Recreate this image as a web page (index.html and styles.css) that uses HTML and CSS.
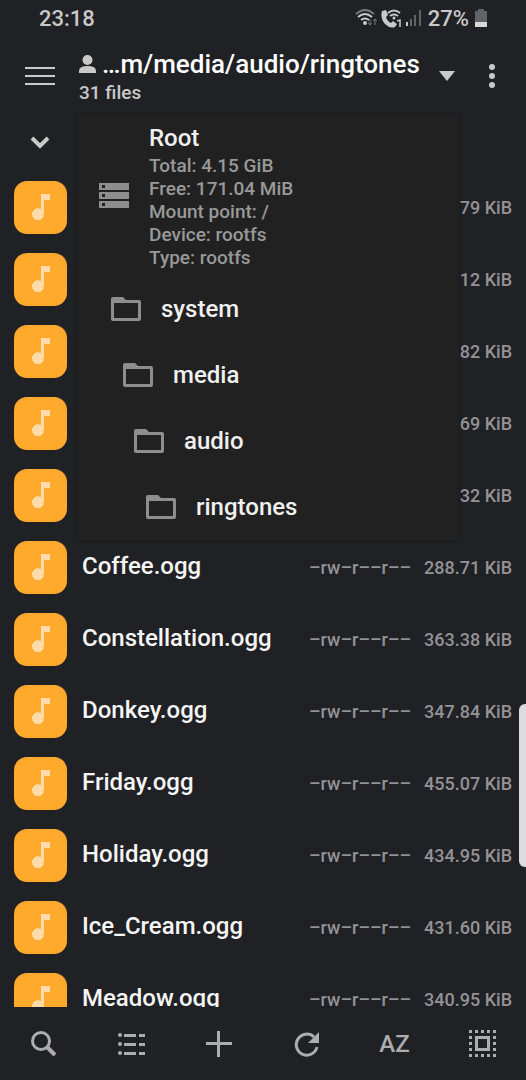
FILE: index.html
```html
<!DOCTYPE html>
<html lang="en">
<head>
  <meta charset="UTF-8" />
  <meta name="viewport" content="width=device-width, initial-scale=1" />
  <title>Ringtones</title>
  <link rel="stylesheet" href="styles.css">
</head>
<body>

  <svg class="sprite" aria-hidden="true">
    <symbol id="folder" viewBox="0 0 30 24">
      <path fill="currentColor" fill-rule="evenodd" d="M2 0h10l3 3h13a2 2 0 0 1 2 2v17a2 2 0 0 1-2 2H2a2 2 0 0 1-2-2V2a2 2 0 0 1 2-2zm1 6v15h24V6z" />
    </symbol>
    <symbol id="note" viewBox="0 0 18 26">
      <path fill="currentColor" d="M9 0h9v6h-6v14a6 6 0 1 1-3-5z" />
    </symbol>
  </svg>

  <div class="status">
    <span>23:18</span>
    <div class="status-right">
      <svg width="67" height="20" viewBox="0 0 67 20">
        <g fill="none" stroke-width="2">
          <path stroke="#77787a" d="M1 6Q10-2 19 6" />
          <path stroke="#c9c9ca" d="M3 9Q10 3 17 9M6 12Q10 9 14 12" />
          <path stroke="#77787a" stroke-width="1" d="M15 11v6M13 15l2 2 2-2M20 17v-6M18 13l2-2 2 2" />
        </g>
        <circle cx="10" cy="15" r="2" fill="#c9c9ca" />
        <path fill="#c9c9ca" d="M27 3l4-1 2 5-2 2q1 4 5 6l2-2 4 3-2 3q-5 2-10-3-5-6-3-13z" />
        <g fill="none" stroke="#c9c9ca" stroke-width="2">
          <path d="M33 5q6-5 12 0M35 8q4-3 8 0" />
          <path stroke-width="1.500" d="M42 13l3-1v7" />
        </g>
        <circle cx="39" cy="10" r="1.500" fill="#c9c9ca" />
        <path fill="#c9c9ca" d="M51 14h2v4h-2z" />
        <path fill="#626365" d="M55 11h2v7h-2zM59 7h2v11h-2zM64 2h2v16h-2z" />
      </svg>
      <span>27%</span>
      <svg width="12" height="18" viewBox="0 0 12 18">
        <path fill="#626365" d="M3 0h6v2h3v11H0V2h3z" />
        <path fill="#d8d8d8" d="M0 13h12v5H0z" />
      </svg>
    </div>
  </div>

  <header class="header">
    <button class="icon-btn" aria-label="Menu">
      <svg width="30" height="20" viewBox="0 0 30 20"><path fill="currentColor" d="M0 1h30v2H0zM0 9h30v2H0zM0 17h30v2H0z" /></svg>
    </button>
    <button class="path">
      <span class="path-text">
        <span class="path-title">
          <svg width="17" height="18" viewBox="0 0 17 18"><circle cx="8.500" cy="5" r="5" fill="currentColor" /><path fill="currentColor" d="M0 18v-2q0-5 8.500-5t8.500 5v2z" /></svg>
          <span>…m/media/audio/ringtones</span>
        </span>
        <span class="path-info">31 files</span>
      </span>
      <svg class="caret" width="16" height="10" viewBox="0 0 16 10"><path fill="currentColor" d="M0 0h16L8 10z" /></svg>
    </button>
    <button class="icon-btn more" aria-label="More options">
      <svg width="8" height="26" viewBox="0 0 8 26"><g fill="currentColor"><circle cx="4" cy="4" r="3" /><circle cx="4" cy="13" r="3" /><circle cx="4" cy="22" r="3" /></g></svg>
    </button>

    <nav class="popup">
      <a class="node root" href="#">
        <svg width="30" height="25" viewBox="0 0 30 25"><path fill="currentColor" fill-rule="evenodd" d="M0 0h30v7H0zm3 2v3h3V2zM0 9h30v7H0zm3 2v3h3v-3zM0 18h30v7H0zm3 2v3h3v-3z" /></svg>
        <span class="root-text">
          <span class="node-name">Root</span>
          <span class="root-info">Total: 4.15 GiB<br>Free: 171.04 MiB<br>Mount point: /<br>Device: rootfs<br>Type: rootfs</span>
        </span>
      </a>
      <a class="node level-1" href="#"><svg width="30" height="24"><use href="#folder" /></svg><span class="node-name">system</span></a>
      <a class="node level-2" href="#"><svg width="30" height="24"><use href="#folder" /></svg><span class="node-name">media</span></a>
      <a class="node level-3" href="#"><svg width="30" height="24"><use href="#folder" /></svg><span class="node-name">audio</span></a>
      <a class="node level-4" href="#"><svg width="30" height="24"><use href="#folder" /></svg><span class="node-name">ringtones</span></a>
    </nav>
  </header>

  <main class="files">
    <button class="expand" aria-label="Expand">
      <svg width="20" height="14" viewBox="0 0 20 14"><path fill="none" stroke="currentColor" stroke-width="4" d="M2 2l8 8 8-8" /></svg>
    </button>
    <ul class="list">
      <li class="row"><span class="thumb"><svg width="18" height="26"><use href="#note" /></svg></span><span class="size">.79 KiB</span></li>
      <li class="row"><span class="thumb"><svg width="18" height="26"><use href="#note" /></svg></span><span class="size">.12 KiB</span></li>
      <li class="row"><span class="thumb"><svg width="18" height="26"><use href="#note" /></svg></span><span class="size">82 KiB</span></li>
      <li class="row"><span class="thumb"><svg width="18" height="26"><use href="#note" /></svg></span><span class="size">69 KiB</span></li>
      <li class="row"><span class="thumb"><svg width="18" height="26"><use href="#note" /></svg></span><span class="size">32 KiB</span></li>
      <li class="row"><span class="thumb"><svg width="18" height="26"><use href="#note" /></svg></span><span class="name">Coffee.ogg</span><span class="perms">–rw–r––r––</span><span class="size">288.71 KiB</span></li>
      <li class="row"><span class="thumb"><svg width="18" height="26"><use href="#note" /></svg></span><span class="name">Constellation.ogg</span><span class="perms">–rw–r––r––</span><span class="size">363.38 KiB</span></li>
      <li class="row"><span class="thumb"><svg width="18" height="26"><use href="#note" /></svg></span><span class="name">Donkey.ogg</span><span class="perms">–rw–r––r––</span><span class="size">347.84 KiB</span></li>
      <li class="row"><span class="thumb"><svg width="18" height="26"><use href="#note" /></svg></span><span class="name">Friday.ogg</span><span class="perms">–rw–r––r––</span><span class="size">455.07 KiB</span></li>
      <li class="row"><span class="thumb"><svg width="18" height="26"><use href="#note" /></svg></span><span class="name">Holiday.ogg</span><span class="perms">–rw–r––r––</span><span class="size">434.95 KiB</span></li>
      <li class="row"><span class="thumb"><svg width="18" height="26"><use href="#note" /></svg></span><span class="name">Ice_Cream.ogg</span><span class="perms">–rw–r––r––</span><span class="size">431.60 KiB</span></li>
      <li class="row"><span class="thumb"><svg width="18" height="26"><use href="#note" /></svg></span><span class="name">Meadow.ogg</span><span class="perms">–rw–r––r––</span><span class="size">340.95 KiB</span></li>
    </ul>
    <div class="scroll-thumb"></div>
  </main>

  <footer class="toolbar">
    <button aria-label="Search">
      <svg width="26" height="26" viewBox="0 0 26 26"><g fill="none" stroke="currentColor"><circle cx="10" cy="10" r="8.500" stroke-width="3" /><path stroke-width="4" d="M16 16l8 8" /></g></svg>
    </button>
    <button aria-label="View">
      <svg width="28" height="24" viewBox="0 0 28 24"><g fill="currentColor"><circle cx="3" cy="3" r="2" /><circle cx="3" cy="12" r="2" /><circle cx="3" cy="21" r="2" /><path d="M7 2h12v3H7zM22 2h6v3h-6zM7 11h12v3H7zM22 11h6v3h-6zM7 20h12v3H7zM22 20h6v3h-6z" /></g></svg>
    </button>
    <button aria-label="Add">
      <svg width="26" height="26" viewBox="0 0 26 26"><path fill="currentColor" d="M11 0h3v11h12v3H14v12h-3V14H0v-3h11z" /></svg>
    </button>
    <button aria-label="Refresh">
      <svg width="26" height="26" viewBox="0 0 26 26"><path fill="none" stroke="currentColor" stroke-width="3" d="M20 6a10.500 10.500 0 1 0 3 10" /><path fill="currentColor" d="M25 1v11H14z" /></svg>
    </button>
    <button>AZ</button>
    <button aria-label="Select all">
      <svg width="27" height="27" viewBox="0 0 27 27"><g fill="none" stroke="currentColor" stroke-width="3"><path stroke-dasharray="3 3" d="M0 1.500h27M0 25.500h27M1.500 0v27M25.500 0v27" /><path d="M7.500 7.500h12v12h-12z" /></g></svg>
    </button>
  </footer>

</body>
</html>
```
FILE: styles.css
```css
* {
  box-sizing: border-box;
}

body {
  display: flex;
  flex-direction: column;
  height: 100vh;
  margin: 0;
  overflow: hidden;
  background: #202125;
  color: #f5f5f5;
  font-family: Roboto, sans-serif;
  font-weight: 500;
}

button {
  padding: 0;
  border: none;
  background: none;
  color: inherit;
  font: inherit;
  text-align: left;
}

svg {
  display: block;
  flex: none;
}

.sprite {
  position: absolute;
  width: 0;
  height: 0;
}

.status {
  display: flex;
  justify-content: space-between;
  align-items: center;
  flex: none;
  height: 36px;
  padding: 0 39px;
  color: #c9c9ca;
  font-size: 22px;
}

.status-right {
  display: flex;
  align-items: center;
  gap: 6px;
}

/* header */
.header {
  position: relative;
  display: flex;
  align-items: center;
  flex: none;
  height: 79px;
}

.icon-btn {
  display: flex;
  justify-content: center;
  align-items: center;
  flex: none;
  width: 79px;
  height: 79px;
  color: #c9c9ca;
}

.icon-btn.more {
  width: 69px;
}

.path {
  display: flex;
  align-items: center;
  justify-content: space-between;
  flex: 1;
  min-width: 0;
}

.path-text {
  display: flex;
  flex-direction: column;
  padding-top: 3px;
}

.path-title {
  display: flex;
  align-items: center;
  gap: 6px;
  color: #fff;
  font-size: 26px;
  line-height: 32px;
  white-space: nowrap;
}

.path-title svg {
  color: #c9c9ca;
}

.path-info {
  color: #c9c9ca;
  font-size: 19px;
  line-height: 26px;
}

.caret {
  margin-right: 2px;
  color: #c9c9ca;
}

/* path popup */
.popup {
  position: absolute;
  z-index: 1;
  top: 79px;
  left: 78px;
  right: 67px;
  background: #212121;
  box-shadow: 0 1px 4px rgba(0, 0, 0, 0.3);
}

.node {
  display: flex;
  align-items: center;
  gap: 20px;
  height: 66px;
  padding-left: 21px;
  color: #8e8e8e;
  text-decoration: none;
}

.root {
  height: 161px;
}

.level-1 { padding-left: 33px; }
.level-2 { padding-left: 45px; }
.level-3 { padding-left: 56px; }
.level-4 { padding-left: 68px; }

.root-text {
  display: flex;
  flex-direction: column;
}

.node-name {
  color: #f0f0f0;
  font-size: 24px;
  line-height: 32px;
}

.root-info {
  color: #999;
  font-size: 19px;
  line-height: 23px;
}

/* file list */
.files {
  position: relative;
  flex: 1;
  min-height: 0;
  overflow: hidden;
}

.expand {
  display: flex;
  justify-content: center;
  align-items: center;
  width: 79px;
  height: 56px;
  color: #c9c9ca;
}

.list {
  margin: 0;
  padding: 0;
  list-style: none;
}

.row {
  display: flex;
  align-items: center;
  height: 72px;
  padding: 0 14px;
}

.thumb {
  display: flex;
  justify-content: center;
  align-items: center;
  width: 53px;
  height: 53px;
  margin-right: 15px;
  border-radius: 13px;
  background: #ffa92d;
  color: #ffdba8;
}

.name {
  padding-bottom: 2px;
  font-size: 24px;
}

.perms,
.size {
  color: #929395;
  font-size: 18px;
}

.perms {
  margin-left: auto;
}

.size {
  width: 89px;
  margin-left: 12px;
  text-align: right;
  white-space: nowrap;
}

.row .thumb + .size {
  margin-left: auto;
}

.scroll-thumb {
  position: absolute;
  top: 66%;
  right: 0;
  width: 7px;
  height: 163px;
  border-radius: 6px 0 0 6px;
  background: #dcdcdc;
}

/* bottom bar */
.toolbar {
  display: grid;
  grid-template-columns: repeat(6, 1fr);
  flex: none;
  height: 73px;
  color: #adadae;
}

.toolbar button {
  display: flex;
  justify-content: center;
  align-items: center;
  font-size: 24px;
}
```
